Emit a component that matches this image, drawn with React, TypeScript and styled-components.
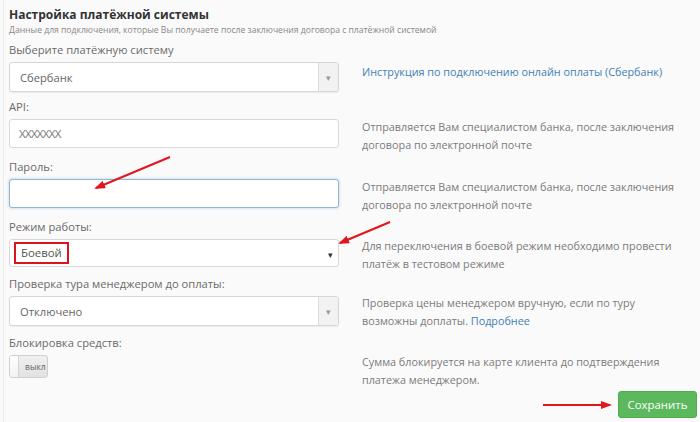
import React from 'react';
import styled, { createGlobalStyle } from 'styled-components';

const GlobalStyle = createGlobalStyle`
  html, body {
    margin: 0;
    padding: 0;
    background: #fafafa;
  }
  body {
    font-family: 'Open Sans', 'Noto Sans', sans-serif;
    color: #555;
  }
`;

type HelpProps = { offset?: number };

export default function App() {
  return (
    <>
      <GlobalStyle />
      <Page>
        <Title>Настройка платёжной системы</Title>
        <Subtitle>
          Данные для подключения, которые Вы получаете после заключения договора с платёжной системой
        </Subtitle>

        <Row space={7}>
          <Label>Выберите платёжную систему</Label>
          <SelectBox>
            <SelectValue>Сбербанк</SelectValue>
            <CaretBox>▾</CaretBox>
          </SelectBox>
          <Help offset={3}>
            <Link>Инструкция по подключению онлайн оплаты (Сбербанк)</Link>
          </Help>
        </Row>

        <Row>
          <Label>API:</Label>
          <Input>XXXXXXX</Input>
          <Help offset={1}>
            Отправляется Вам специалистом банка, после заключения
            <br />
            договора по электронной почте
          </Help>
        </Row>

        <Row>
          <Label>Пароль:</Label>
          <Input focused />
          <Help offset={1}>
            Отправляется Вам специалистом банка, после заключения
            <br />
            договора по электронной почте
          </Help>
        </Row>

        <Row space={3}>
          <Label>Режим работы:</Label>
          <PlainSelect>
            <Marked>Боевой</Marked>
            <DarkCaret>▾</DarkCaret>
          </PlainSelect>
          <Help>
            Для переключения в боевой режим необходимо провести
            <br />
            платёж в тестовом режиме
          </Help>
        </Row>

        <Row>
          <Label>Проверка тура менеджером до оплаты:</Label>
          <SelectBox>
            <SelectValue>Отключено</SelectValue>
            <CaretBox>▾</CaretBox>
          </SelectBox>
          <Help>
            Проверка цены менеджером вручную, если по туру
            <br />
            возможны доплаты. <Link>Подробнее</Link>
          </Help>
        </Row>

        <Row>
          <Label>Блокировка средств:</Label>
          <Switch>
            <Handle />
            <SwitchText>выкл</SwitchText>
          </Switch>
          <Help>
            Сумма блокируется на карте клиента до подтверждения
            <br />
            платежа менеджером.
          </Help>
        </Row>

        <Footer>
          <SaveButton>Сохранить</SaveButton>
        </Footer>

        <Arrows viewBox="0 0 700 422">
          <defs>
            <marker id="head" markerWidth="11" markerHeight="8" refX="9" refY="4" orient="auto" markerUnits="userSpaceOnUse">
              <path d="M0,0 L11,4 L0,8 Z" fill="#e0161c" />
            </marker>
          </defs>
          <line x1="170" y1="157" x2="96" y2="188" stroke="#e0161c" strokeWidth="2" markerEnd="url(#head)" />
          <line x1="390" y1="222" x2="340" y2="243" stroke="#e0161c" strokeWidth="2" markerEnd="url(#head)" />
          <line x1="543" y1="405" x2="610" y2="405" stroke="#e0161c" strokeWidth="2" markerEnd="url(#head)" />
        </Arrows>
      </Page>
    </>
  );
}

const Page = styled.div`
  position: relative;
  width: 697px;
  height: 422px;
  box-sizing: border-box;
  margin-left: 3px;
  border-left: 1px solid #ececec;
  padding: 5px 3px 0 5px;
  overflow: hidden;
`;

const Title = styled.div`
  font-size: 12px;
  font-weight: 700;
  color: #333;
  line-height: 19px;
`;

const Subtitle = styled.div`
  font-size: 8.6px;
  color: #888;
  line-height: 12px;
  margin-bottom: 6px;
  white-space: nowrap;
`;

const Row = styled.div<{ space?: number }>`
  display: grid;
  grid-template-columns: 330px 1fr;
  column-gap: 23px;
  margin-bottom: ${p => p.space ?? 5}px;
`;

const Label = styled.div`
  grid-column: 1 / 3;
  font-size: 11.2px;
  color: #6a6a6a;
  line-height: 16px;
  margin-bottom: 4px;
`;

const SelectBox = styled.div`
  display: flex;
  height: 30px;
  box-sizing: border-box;
  background: #fff;
  border: 1px solid #d6d6d6;
  border-radius: 3px;
  box-shadow: 0 1px 1px rgba(0, 0, 0, 0.06);
  overflow: hidden;
`;

const SelectValue = styled.div`
  flex: 1;
  display: flex;
  align-items: center;
  padding-left: 10px;
  font-size: 11.2px;
  color: #666;
`;

const CaretBox = styled.div`
  width: 19px;
  display: flex;
  align-items: center;
  justify-content: center;
  background: #f2f2f2;
  border-left: 1px solid #dcdcdc;
  color: #999;
  font-size: 9px;
`;

const Input = styled.div<{ focused?: boolean }>`
  height: 29px;
  box-sizing: border-box;
  background: #fff;
  border: 1px solid ${p => (p.focused ? '#8fb8d8' : '#d9d9d9')};
  border-radius: 3px;
  box-shadow: ${p => (p.focused ? '0 0 3px rgba(102, 160, 210, 0.5)' : 'none')};
  padding-left: 9px;
  display: flex;
  align-items: center;
  font-size: 11.5px;
  color: #777;
  letter-spacing: -0.7px;
`;

const PlainSelect = styled.div`
  height: 28px;
  box-sizing: border-box;
  background: #fff;
  border: 1px solid #d9d9d9;
  border-radius: 3px;
  display: flex;
  align-items: center;
  justify-content: space-between;
  padding: 0 5px 0 4px;
`;

const Marked = styled.span`
  border: 2px solid #d9141c;
  padding: 1px 5px;
  font-size: 11.4px;
  color: #555;
  line-height: 16px;
`;

const DarkCaret = styled.span`
  font-size: 9px;
  color: #333;
  margin-top: 3px;
`;

const Help = styled.div<HelpProps>`
  align-self: start;
  margin-top: ${p => (p.offset ?? 0) - 2}px;
  font-size: 10.8px;
  line-height: 18px;
  color: #7a7a7a;
  white-space: nowrap;
`;

const Link = styled.span`
  color: #3f7fb3;
`;

const Switch = styled.div`
  display: flex;
  width: 39px;
  height: 23px;
  box-sizing: border-box;
  border: 1px solid #d0d0d0;
  border-radius: 3px;
  background: linear-gradient(#f0f0f0, #e2e2e2);
  overflow: hidden;
`;

const Handle = styled.div`
  width: 8px;
  background: linear-gradient(#fff, #f2f2f2);
  border-right: 1px solid #d4d4d4;
`;

const SwitchText = styled.div`
  padding-left: 6px;
  font-size: 8.5px;
  line-height: 21px;
  color: #666;
  white-space: nowrap;
`;

const Footer = styled.div`
  display: flex;
  justify-content: flex-end;
  margin-top: -3px;
`;

const SaveButton = styled.div`
  width: 79px;
  height: 27px;
  box-sizing: border-box;
  background: #5cb85c;
  border: 1px solid #4cae4c;
  border-radius: 3px;
  color: #fff;
  font-size: 11.4px;
  display: flex;
  align-items: center;
  justify-content: center;
`;

const Arrows = styled.svg`
  position: absolute;
  left: -4px;
  top: 0;
  width: 700px;
  height: 422px;
  pointer-events: none;
`;
